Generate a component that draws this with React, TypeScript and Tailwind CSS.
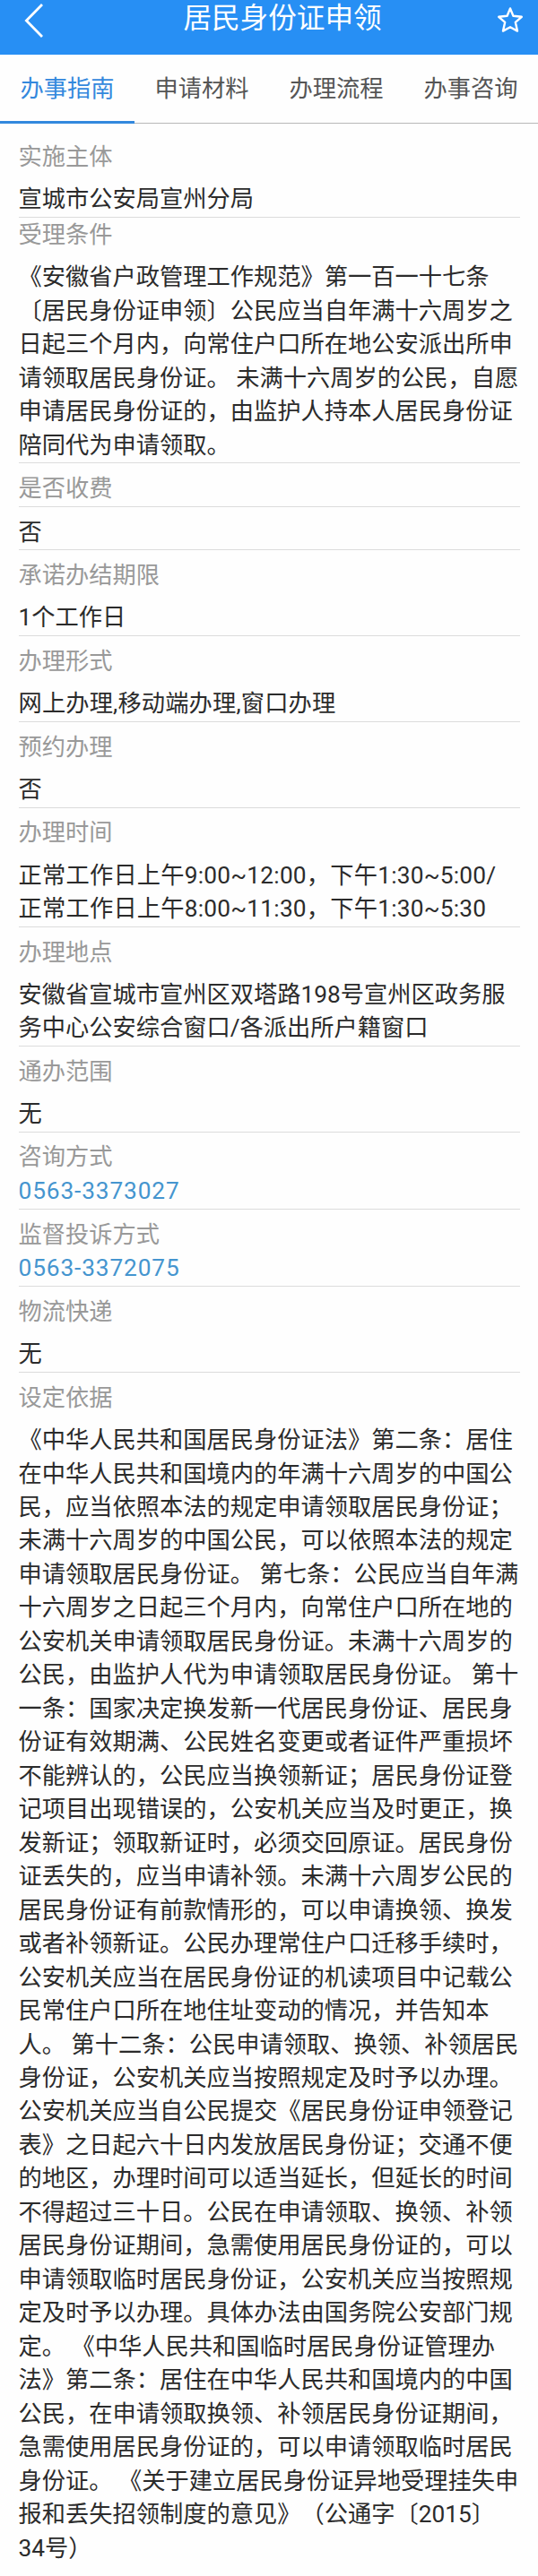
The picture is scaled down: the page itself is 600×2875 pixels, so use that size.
import { clsx } from "clsx"

const tabs = ["办事指南", "申请材料", "办理流程", "办事咨询"]

type Item = {
  label: string
  value: string
  kind?: "text" | "phone" | "split"
  // top padding when it differs from the usual one
  top?: string
  tracking?: string
}

const items: Item[] = [
  { label: "实施主体", value: "宣城市公安局宣州分局", top: "pt-[19px]" },
  {
    label: "受理条件",
    top: "pt-[1.3px]",
    value: `《安徽省户政管理工作规范》第一百一十七条
〔居民身份证申领〕公民应当自年满十六周岁之
日起三个月内，向常住户口所在地公安派出所申
请领取居民身份证。 未满十六周岁的公民，自愿
申请居民身份证的，由监护人持本人居民身份证
陪同代为申请领取。`,
  },
  { label: "是否收费", value: "否", kind: "split" },
  { label: "承诺办结期限", value: "1个工作日" },
  { label: "办理形式", value: "网上办理,移动端办理,窗口办理", tracking: "tracking-[0.15px]" },
  { label: "预约办理", value: "否" },
  {
    label: "办理时间",
    tracking: "tracking-[0.22px]",
    value: `正常工作日上午9:00~12:00，下午1:30~5:00/
正常工作日上午8:00~11:30，下午1:30~5:30`,
  },
  {
    label: "办理地点",
    value: `安徽省宣城市宣州区双塔路198号宣州区政务服
务中心公安综合窗口/各派出所户籍窗口`,
  },
  { label: "通办范围", value: "无" },
  { label: "咨询方式", value: "0563-3373027", kind: "phone" },
  { label: "监督投诉方式", value: "0563-3372075", kind: "phone" },
  { label: "物流快递", value: "无" },
  {
    label: "设定依据",
    value: `《中华人民共和国居民身份证法》第二条：居住
在中华人民共和国境内的年满十六周岁的中国公
民，应当依照本法的规定申请领取居民身份证；
未满十六周岁的中国公民，可以依照本法的规定
申请领取居民身份证。 第七条：公民应当自年满
十六周岁之日起三个月内，向常住户口所在地的
公安机关申请领取居民身份证。未满十六周岁的
公民，由监护人代为申请领取居民身份证。 第十
一条：国家决定换发新一代居民身份证、居民身
份证有效期满、公民姓名变更或者证件严重损坏
不能辨认的，公民应当换领新证；居民身份证登
记项目出现错误的，公安机关应当及时更正，换
发新证；领取新证时，必须交回原证。居民身份
证丢失的，应当申请补领。未满十六周岁公民的
居民身份证有前款情形的，可以申请换领、换发
或者补领新证。公民办理常住户口迁移手续时，
公安机关应当在居民身份证的机读项目中记载公
民常住户口所在地住址变动的情况，并告知本
人。 第十二条：公民申请领取、换领、补领居民
身份证，公安机关应当按照规定及时予以办理。
公安机关应当自公民提交《居民身份证申领登记
表》之日起六十日内发放居民身份证；交通不便
的地区，办理时间可以适当延长，但延长的时间
不得超过三十日。公民在申请领取、换领、补领
居民身份证期间，急需使用居民身份证的，可以
申请领取临时居民身份证，公安机关应当按照规
定及时予以办理。具体办法由国务院公安部门规
定。 《中华人民共和国临时居民身份证管理办
法》第二条：居住在中华人民共和国境内的中国
公民，在申请领取换领、补领居民身份证期间，
急需使用居民身份证的，可以申请领取临时居民
身份证。 《关于建立居民身份证异地受理挂失申
报和丢失招领制度的意见》（公通字〔2015〕
34号）`,
  },
]

function Header() {
  return (
    <header className="flex h-[61px] items-start justify-between bg-[#278ff4] pl-[27px] pr-[16px] text-white">
      <svg className="mt-1 h-[38px] w-[22px]" viewBox="0 0 22 38" fill="none" stroke="currentColor" strokeWidth="2.8">
        <path d="M20 1 L2.4 19 L20 37" />
      </svg>
      <h1 className="ml-[27px] mt-[2px] text-[31.6px] leading-[38px]">居民身份证申领</h1>
      <svg className="mt-[7px] h-[30px] w-[30px]" viewBox="0 0 30 30" fill="none" stroke="currentColor" strokeWidth="2.4" strokeLinejoin="round">
        <path d="M15 2.4 L18.4 10.8 L27.8 11.8 L20.8 17.8 L23 27.6 L15 23.2 L7 27.6 L9.2 17.8 L2.2 11.8 L11.6 10.8 Z" />
      </svg>
    </header>
  )
}

function TabBar() {
  return (
    <nav className="grid h-[77px] grid-cols-4">
      {tabs.map((tab, i) => (
        <button
          key={tab}
          className={clsx(
            "flex items-center justify-center pt-[4px] text-[26.25px] leading-[37.5px]",
            i === 0 ? "border-b-3 border-[#3388dd] text-[#3388dd]" : "border-b border-[#b8b8b8] pb-[2px] text-[#555]",
          )}
        >
          {tab}
        </button>
      ))}
    </nav>
  )
}

function Section({ item, last }: { item: Item; last: boolean }) {
  const { label, value, kind = "text", top = "pt-[9.8px]", tracking } = item
  return (
    <section className={clsx(top, !last && "border-b border-[#dcdcdc]", kind === "phone" ? "pb-[0.6px]" : "pb-[0.2px]")}>
      <h2 className={clsx("text-[#999]", kind === "split" && "border-b border-[#dcdcdc] pb-[0.2px]")}>{label}</h2>
      {kind === "phone" ? (
        <a className="block text-[#4595cf] tracking-[0.88px]">{value}</a>
      ) : (
        <p className={clsx("whitespace-pre pt-[9.8px] text-[#2b2b2b]", tracking)}>{value}</p>
      )}
    </section>
  )
}

export default function App() {
  return (
    <div className="h-[2875px] w-[600px] overflow-hidden bg-[#fefefe] font-[Roboto,'Noto_Sans_CJK_SC',sans-serif] [text-spacing-trim:space-all]">
      <Header />
      <TabBar />
      <main className="ml-[20.5px] mr-[20px] text-[26.25px] leading-[37.47px]">
        {items.map((item, i) => (
          <Section key={item.label} item={item} last={i === items.length - 1} />
        ))}
      </main>
    </div>
  )
}
